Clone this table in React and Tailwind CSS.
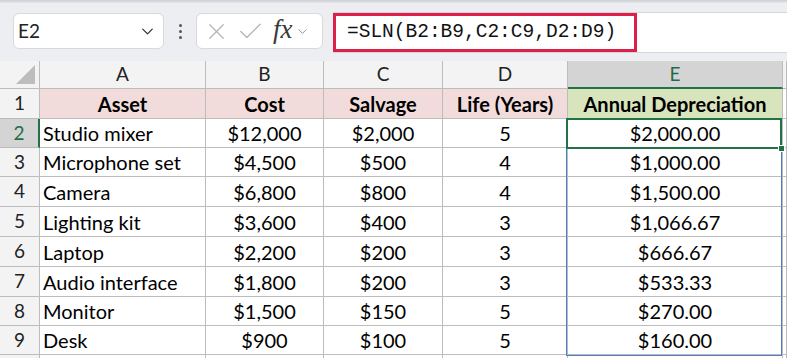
import { ChevronDown, X, Check } from 'lucide-react';

const cols = ['A', 'B', 'C', 'D', 'E'];

const rows = [
  ['Studio mixer', '$12,000', '$2,000', '5', '$2,000.00'],
  ['Microphone set', '$4,500', '$500', '4', '$1,000.00'],
  ['Camera', '$6,800', '$800', '4', '$1,500.00'],
  ['Lighting kit', '$3,600', '$400', '3', '$1,066.67'],
  ['Laptop', '$2,200', '$200', '3', '$666.67'],
  ['Audio interface', '$1,800', '$200', '3', '$533.33'],
  ['Monitor', '$1,500', '$150', '5', '$270.00'],
  ['Desk', '$900', '$100', '5', '$160.00'],
];

// row heights so the lines land where the screenshot has them
const rowH = ['h-[29px]', 'h-[29px]', 'h-[30px]', 'h-[30px]', 'h-[30px]', 'h-[30px]', 'h-[29px]', 'h-[29px]'];

const cell = 'border-r border-b border-[#bcbcbc] flex items-center';

export default function App() {
  return (
    <div className="w-[787px] h-[358px] overflow-hidden bg-white font-['Lato','Noto_Sans',sans-serif] text-black">
      {/* TOOLBAR */}
      <div className="h-[61px] bg-[#eceef1] relative">
        <div className="h-[3px] bg-gradient-to-b from-[#cdcfd2] to-[#e3e5e8]" />
        <div className="flex items-start pt-[10px]">
          <div className="ml-[13px] w-[151px] h-[36px] bg-white rounded-[6px] border border-[#d9d9d9] flex items-center pl-[4px] pr-[6px]">
            <span className="text-[19px] text-[#222]">E2</span>
            <ChevronDown className="ml-auto text-[#333]" size={19} strokeWidth={1.6} />
          </div>
          <div className="w-[32px] h-[36px] flex flex-col items-center justify-center gap-[3px]">
            <span className="w-[3px] h-[3px] rounded-full bg-[#555]" />
            <span className="w-[3px] h-[3px] rounded-full bg-[#555]" />
            <span className="w-[3px] h-[3px] rounded-full bg-[#555]" />
          </div>
          <div className="w-[127px] h-[36px] bg-white rounded-[6px] border border-[#d9d9d9] flex items-center pl-[6px]">
            <X className="text-[#b4b4b4]" size={27} strokeWidth={1.1} />
            <Check className="ml-[6px] text-[#b4b4b4]" size={29} strokeWidth={1.1} />
            <span className="ml-[8px] text-[27px] italic font-['Liberation_Serif',serif] text-[#3a3a3a] leading-none -mt-[3px]">fx</span>
            <ChevronDown className="ml-[2px] text-[#999]" size={15} strokeWidth={1.6} />
          </div>
          <div className="ml-[10px] flex-1 h-[41px] -mt-[1px] bg-white border-t border-b border-[#d6d6d6] flex items-stretch">
            <div className="w-[304px] border-[3px] border-[#dc1f4b] flex items-center pl-[11px]">
              <span className="font-['Liberation_Mono',monospace] text-[19.5px] text-[#111]">=SLN(B2:B9,C2:C9,D2:D9)</span>
            </div>
          </div>
        </div>
      </div>

      {/* GRID */}
      <div className="relative">
        <div className="grid grid-cols-[40px_166px_118px_119px_125px_215px_1fr]">
          {/* column headers */}
          <div className={`${cell} h-[28px] bg-[#f3f3f3] justify-end items-end pr-[4px] pb-[4px]`}>
            <div className="w-0 h-0 border-l-[19px] border-l-transparent border-b-[19px] border-b-[#bdbdbd]" />
          </div>
          {cols.map(c => (
            <div
              key={c}
              className={`${cell} h-[28px] justify-center text-[19px] ${
                c === 'E' ? 'bg-[#d4d4d4] text-[#1f6e43] border-b-2 border-b-[#217346]' : 'bg-[#f3f3f3] text-[#222]'
              }`}
            >
              {c}
            </div>
          ))}
          <div className={`${cell} h-[28px] bg-[#f3f3f3]`} />

          {/* row 1 */}
          <div className={`${cell} h-[30px] bg-[#f3f3f3] justify-center text-[19px] text-[#222]`}>1</div>
          {['Asset', 'Cost', 'Salvage', 'Life (Years)'].map(h => (
            <div key={h} className={`${cell} h-[30px] bg-[#f2dcdb] justify-center font-bold text-[20px]`}>{h}</div>
          ))}
          <div className={`${cell} h-[30px] bg-[#d8e4bc] justify-center font-bold text-[20px]`}>Annual Depreciation</div>
          <div className={`${cell} h-[30px]`} />

          {/* data rows */}
          {rows.map((r, i) => (
            <div key={i} className="contents">
              <div
                className={`${cell} ${rowH[i]} justify-center text-[19px] ${
                  i === 0 ? 'bg-[#d4d4d4] text-[#1f6e43] border-r-2 border-r-[#217346]' : 'bg-[#f3f3f3] text-[#222]'
                }`}
              >
                {i + 2}
              </div>
              <div className={`${cell} ${rowH[i]} pl-[3px] text-[20px]`}>{r[0]}</div>
              <div className={`${cell} ${rowH[i]} justify-center text-[20px]`}>{r[1]}</div>
              <div className={`${cell} ${rowH[i]} justify-center text-[20px]`}>{r[2]}</div>
              <div className={`${cell} ${rowH[i]} justify-center text-[20px]`}>{r[3]}</div>
              <div className={`${cell} ${rowH[i]} justify-center text-[20px]`}>{r[4]}</div>
              <div className={`${cell} ${rowH[i]}`} />
            </div>
          ))}

          {/* row 10 (cut off) */}
          <div className={`${cell} h-[30px] bg-[#f3f3f3]`} />
          {[0, 1, 2, 3, 4, 5].map(k => (
            <div key={k} className={`${cell} h-[30px]`} />
          ))}
        </div>

        {/* spill range outline E2:E9 */}
        <div className="absolute left-[566px] top-[57px] w-[216px] h-[238px] border-[1.5px] border-[#4a7cc7] pointer-events-none" />
        {/* active cell E2 */}
        <div className="absolute left-[566px] top-[57px] w-[216px] h-[31px] border-2 border-[#217346] pointer-events-none" />
        <div className="absolute left-[778px] top-[84px] w-[7px] h-[7px] bg-[#217346] border border-white pointer-events-none" />
      </div>
    </div>
  );
}
